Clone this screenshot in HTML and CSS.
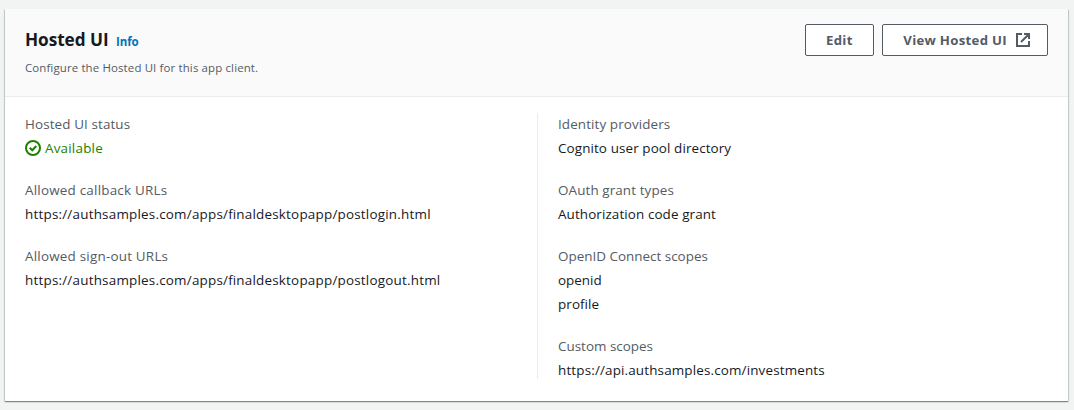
FILE: index.html
```html
<!DOCTYPE html>
<html lang="en">
<head>
<meta charset="utf-8">
<title>Hosted UI</title>
<link rel="stylesheet" href="styles.css">
</head>
<body>
<section class="card">
  <header class="card-header">
    <div class="heading">
      <h2 class="title">Hosted UI <a class="info">Info</a></h2>
      <p class="description">Configure the Hosted UI for this app client.</p>
    </div>
    <div class="actions">
      <button class="button">Edit</button>
      <button class="button with-icon">View Hosted UI
        <svg class="icon" viewBox="0 0 16 16"><path d="M7 2H2v12h12V9M9 2h5v5M6 10l8-8"/></svg>
      </button>
    </div>
  </header>
  <div class="columns">
    <dl class="column">
      <div class="field"><dt>Hosted UI status</dt><dd class="status"><svg class="icon" viewBox="0 0 16 16"><circle cx="8" cy="8" r="7"/><path d="M4.700 7.700l2.600 2.600 4-4.300"/></svg>Available</dd></div>
      <div class="field"><dt class="wide">Allowed callback URLs</dt><dd class="wide">https://authsamples.com/apps/finaldesktopapp/postlogin.html</dd></div>
      <div class="field"><dt class="wide">Allowed sign-out URLs</dt><dd class="wide">https://authsamples.com/apps/finaldesktopapp/postlogout.html</dd></div>
    </dl>
    <dl class="column divided">
      <div class="field"><dt>Identity providers</dt><dd>Cognito user pool directory</dd></div>
      <div class="field"><dt>OAuth grant types</dt><dd>Authorization code grant</dd></div>
      <div class="field"><dt class="compact">OpenID Connect scopes</dt><dd class="compact">openid</dd><dd>profile</dd></div>
      <div class="field"><dt class="compact">Custom scopes</dt><dd class="api">https://api.authsamples.com/investments</dd></div>
    </dl>
  </div>
</section>
</body>
</html>
```
FILE: styles.css
```css
* { box-sizing: border-box; }
body { margin: 0; padding: 9px 5px 0; height: 410px; background: #f2f3f3; font: 13.45px/24px "Open Sans", sans-serif; font-feature-settings: "liga" 1; letter-spacing: .1px; color: #16191f; }
.card { width: 1063px; height: 392px; background: #fff; box-shadow: 0 1px 1px rgba(0,28,36,.3), 1px 1px 1px rgba(0,28,36,.15), -1px 1px 1px rgba(0,28,36,.15); }
.card-header { display: flex; justify-content: space-between; height: 88px; padding: 15px 20px; background: #fafafa; border-bottom: 1px solid #eaeded; }
.title { margin: 0; font-size: 17.2px; line-height: 32px; font-weight: 700; letter-spacing: -.05px; }
.info { margin-left: 3px; font-size: 11.5px; font-weight: 700; color: #0073bb; }
.description { margin: -2px 0 0; font-size: 11.45px; letter-spacing: .14px; color: #545b64; }
.actions { display: flex; gap: 8px; }
.button { display: flex; align-items: center; gap: 8px; height: 32px; padding: 0 20.3px; border: 1px solid #545b64; border-radius: 2px; background: #fff; font: 700 13.2px "Open Sans", sans-serif; color: #545b64; letter-spacing: .3px; }
.with-icon { padding-right: 16px; }
.icon { width: 16px; height: 16px; fill: none; stroke: currentColor; stroke-width: 2; }
.columns { display: grid; grid-template-columns: 532px 1fr; padding: 16px 0; }
.column { display: flex; flex-direction: column; gap: 18px; margin: 0; padding-left: 20px; height: 266px; }
.divided { border-left: 1px solid #eaeded; }
.field { margin-top: -1px; margin-bottom: 1px; }
dt { color: #545b64; }
dd { margin: 0; }
.wide { letter-spacing: .21px; }
.compact { letter-spacing: 0; }
.api { letter-spacing: .15px; }
.status { display: flex; align-items: center; gap: 4px; letter-spacing: .2px; color: #1d8102; }
```
